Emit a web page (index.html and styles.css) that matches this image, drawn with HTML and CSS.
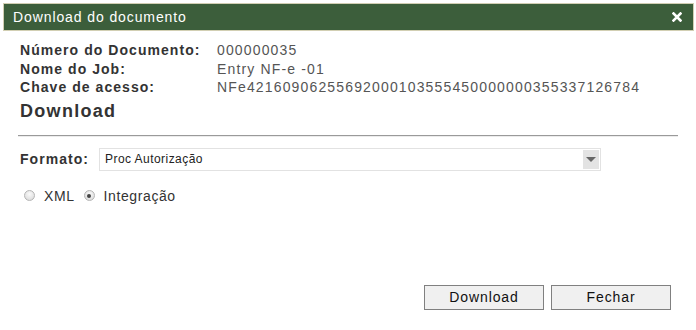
FILE: index.html
```html
<!DOCTYPE html>
<html lang="pt">
<head>
<meta charset="utf-8">
<title>Download do documento</title>
<link rel="stylesheet" href="styles.css">
</head>
<body>
<div class="dialog">
  <div class="titlebar">
    <span class="title">Download do documento</span>
    <span class="close" aria-label="Fechar">
      <svg width="10" height="10" viewBox="0 0 10 10"><path d="M1.5 1.5 L8.5 8.5 M8.5 1.5 L1.5 8.5" stroke="#fff" stroke-width="2.6" stroke-linecap="square"/></svg>
    </span>
  </div>
  <div class="content">
    <div class="info">
      <div class="lbl">Número do Documento:</div><div class="val">000000035</div>
      <div class="lbl">Nome do Job:</div><div class="val">Entry NF-e -01</div>
      <div class="lbl">Chave de acesso:</div><div class="val">NFe42160906255692000103555450000000355337126784</div>
    </div>
    <h2 class="heading">Download</h2>
    <div class="rule"></div>
    <div class="formrow">
      <span class="lbl">Formato:</span>
      <div class="select">
        <span class="sel-text">Proc Autorização</span>
        <span class="sel-arrow"><span class="tri"></span></span>
      </div>
    </div>
    <div class="radios">
      <span class="radio"></span><span class="rlabel">XML</span>
      <span class="radio checked"></span><span class="rlabel">Integração</span>
    </div>
    <div class="footer">
      <button class="btn">Download</button>
      <button class="btn">Fechar</button>
    </div>
  </div>
</div>
</body>
</html>
```
FILE: styles.css
```css
html, body {
  margin: 0;
  padding: 0;
  background: #fff;
}
body {
  font-family: "Liberation Sans", Arial, sans-serif;
  width: 696px;
  height: 330px;
  overflow: hidden;
}
.dialog {
  padding: 3px 2px 0 3px;
}
.titlebar {
  height: 26px;
  background: #3c5e3b;
  border: 1px solid #d2cfb3;
  display: flex;
  align-items: center;
  justify-content: space-between;
  padding: 0 11px 0 9px;
}
.title {
  color: #fff;
  font-size: 14px;
  letter-spacing: 0.9px;
}
.close {
  display: flex;
  width: 10px;
  height: 10px;
}
.content {
  padding: 10px 0 0 17px;
}
.info {
  display: grid;
  grid-template-columns: 197px 1fr;
  line-height: 18.5px;
  font-size: 14px;
}
.lbl {
  font-weight: bold;
  color: #333;
  font-size: 14px;
  letter-spacing: 1.05px;
}
.val {
  color: #555;
  letter-spacing: 1.15px;
}
.heading {
  margin: 3px 0 0 0;
  font-size: 18px;
  line-height: 22px;
  font-weight: bold;
  color: #333;
  letter-spacing: 1.3px;
}
.rule {
  margin: 13px 16px 0 -2px;
  border-top: 1px solid #9a9a9a;
  border-bottom: 1px solid #ececec;
}
.formrow {
  display: flex;
  align-items: center;
  margin-top: 11px;
}
.formrow .lbl {
  width: 79px;
}
.select {
  width: 500px;
  height: 21px;
  border: 1px solid #e2e2e2;
  display: flex;
  align-items: center;
  justify-content: space-between;
  font-size: 12px;
  letter-spacing: 0.45px;
  color: #222;
}
.sel-text {
  padding-left: 5px;
}
.sel-arrow {
  width: 16px;
  height: 19px;
  margin-right: 1px;
  background: #e3e3e3;
  display: flex;
  align-items: center;
  justify-content: center;
}
.tri {
  width: 0;
  height: 0;
  border-left: 5px solid transparent;
  border-right: 5px solid transparent;
  border-top: 5px solid #666;
}
.radios {
  display: flex;
  align-items: center;
  margin-top: 16px;
  height: 18px;
  font-size: 14px;
  color: #333;
  padding-left: 4px;
  letter-spacing: 0.6px;
}
.radio {
  width: 9px;
  height: 9px;
  border-radius: 50%;
  border: 1px solid #b5b5b5;
  background: radial-gradient(circle at 50% 35%, #fafafa, #d6d6d6);
  position: relative;
}
.radio.checked::after {
  content: "";
  position: absolute;
  left: 2.5px;
  top: 2.5px;
  width: 4px;
  height: 4px;
  border-radius: 50%;
  background: #444;
}
.rlabel {
  margin-left: 9px;
  margin-right: 9px;
}
.footer {
  display: flex;
  justify-content: flex-end;
  gap: 7px;
  margin-top: 80px;
  padding-right: 23px;
}
.btn {
  width: 120px;
  height: 25px;
  background: #f0f0f0;
  border: 1px solid #808080;
  font-family: "Liberation Sans", Arial, sans-serif;
  font-size: 14px;
  letter-spacing: 0.9px;
  color: #111;
  padding: 0;
}
```
